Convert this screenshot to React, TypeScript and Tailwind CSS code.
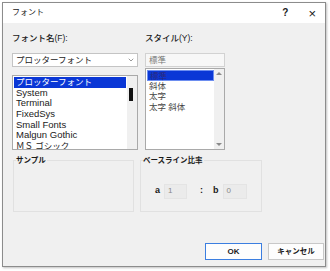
import { ChevronDown } from 'lucide-react';

const fonts = ['プロッターフォント', 'System', 'Terminal', 'FixedSys', 'Small Fonts', 'Malgun Gothic', 'ＭＳ ゴシック'];
const styles = ['標準', '斜体', '太字', '太字 斜体'];

export default function App() {
  return (
    <div className="w-[330px] h-[271px] bg-white pt-[2px] pl-[2px] font-['Liberation_Sans','Noto_Sans_CJK_JP',sans-serif] text-[#1a1a1a]">
      <div className="w-[324px] h-[265px] border border-[#8c8c8c] bg-[#f0f0f0] flex flex-col shadow-[1px_1px_2px_rgba(0,0,0,0.25)]">
        {/* Title bar */}
        <div className="h-[20px] bg-white flex items-center pl-[9px] pr-[9px]">
          <span className="text-[8px] leading-none">フォント</span>
          <span className="ml-auto text-[10px] font-bold leading-none">?</span>
          <span className="ml-[20px] text-[13px] leading-none font-light">×</span>
        </div>

        {/* Lists */}
        <div className="flex pl-[9px] pt-[10px]">
          <div className="w-[126px] flex flex-col">
            <div className="h-[10px] text-[8.5px] leading-[10px] font-medium">フォント名(F):</div>
            <div className="mt-[10px] h-[14px] bg-white border border-[#c4c4c4] flex items-center pl-[3px] pr-[2px] text-[8.5px]">
              <span>プロッターフォント</span>
              <ChevronDown className="ml-auto w-[8px] h-[8px] text-[#666]" strokeWidth={2} />
            </div>
            <div className="mt-[8px] h-[75px] bg-white border border-[#a9a9a9] flex overflow-hidden">
              <div className="flex-1 pl-[1px] pt-[1px] pr-[1px] text-[9.5px]">
                {fonts.map((f, i) => (
                  <div
                    key={f}
                    className={`h-[10.7px] leading-[10.7px] pl-[2px] whitespace-nowrap ${
                      i === 0 ? 'bg-[#0a37d6] text-white text-[8.5px]' : ''
                    } ${i === 6 ? 'text-[8.5px]' : ''}`}
                  >
                    {f}
                  </div>
                ))}
              </div>
              <div className="w-[10px] bg-[#f0f0f0] pt-[12px] pl-[2px]">
                <div className="w-[4px] h-[13px] bg-[#111]" />
              </div>
            </div>
          </div>

          <div className="ml-[7px] w-[80px] flex flex-col">
            <div className="h-[10px] text-[8.5px] leading-[10px] font-medium">スタイル(Y):</div>
            <div className="mt-[10px] h-[14px] bg-[#f7f7f7] border border-[#d2d2d2] flex items-center pl-[3px] text-[8.5px] text-[#777]">
              標準
            </div>
            <div className="mt-[1px] h-[82px] bg-white border border-[#a9a9a9] flex overflow-hidden">
              <div className="flex-1 pl-[1px] pt-[1px] text-[8.5px] text-[#444]">
                {styles.map((s, i) => (
                  <div
                    key={s}
                    className={`h-[10.6px] leading-[10.6px] pl-[2px] whitespace-nowrap ${
                      i === 0 ? 'bg-[#0a37d6] text-[#2a2a80] border border-[#6d8ef0]' : ''
                    }`}
                  >
                    {s}
                  </div>
                ))}
              </div>
              <div className="w-[10px] bg-[#f0f0f0] flex flex-col items-center justify-between py-[3px]">
                <div className="w-0 h-0 border-l-[3px] border-r-[3px] border-b-[3px] border-l-transparent border-r-transparent border-b-[#8a8a8a]" />
                <div className="w-0 h-0 border-l-[3px] border-r-[3px] border-t-[3px] border-l-transparent border-r-transparent border-t-[#8a8a8a]" />
              </div>
            </div>
          </div>
        </div>

        {/* Group boxes */}
        <div className="flex pl-[10px] mt-[10px] gap-[6px]">
          <div className="relative w-[121px] h-[52px] border border-[#e1e1e1]">
            <span className="absolute left-[2px] top-[-5px] bg-[#f0f0f0] text-[7.5px] leading-[9px] font-bold pr-[1px]">
              サンプル
            </span>
          </div>
          <div className="relative w-[122px] h-[52px] border border-[#e1e1e1] flex items-center pl-[14px] pt-[10px]">
            <span className="absolute left-[2px] top-[-5px] bg-[#f0f0f0] text-[7.5px] leading-[9px] font-bold pr-[1px]">
              ベースライン比率
            </span>
            <span className="text-[9px] font-bold">a</span>
            <div className="ml-[4px] w-[23px] h-[15px] bg-[#ebebeb] border border-[#e4e4e4] text-[8px] text-[#888] pl-[3px] leading-[11px]">1</div>
            <span className="ml-[13px] text-[9px] font-bold">:</span>
            <span className="ml-[10px] text-[9px] font-bold">b</span>
            <div className="ml-[4px] w-[24px] h-[15px] bg-[#ebebeb] border border-[#e4e4e4] text-[8px] text-[#888] pl-[3px] leading-[11px]">0</div>
          </div>
        </div>

        {/* Buttons */}
        <div className="mt-auto mb-[6px] flex justify-end pr-[1px] gap-[6px]">
          <button className="w-[57px] h-[17px] bg-[#fdfdfd] border border-[#3b7ee0] text-[8px] font-bold leading-none">OK</button>
          <button className="w-[56px] h-[17px] bg-[#fdfdfd] border border-[#c8c8c8] text-[7.5px] font-bold leading-none">キャンセル</button>
        </div>
      </div>
    </div>
  );
}
